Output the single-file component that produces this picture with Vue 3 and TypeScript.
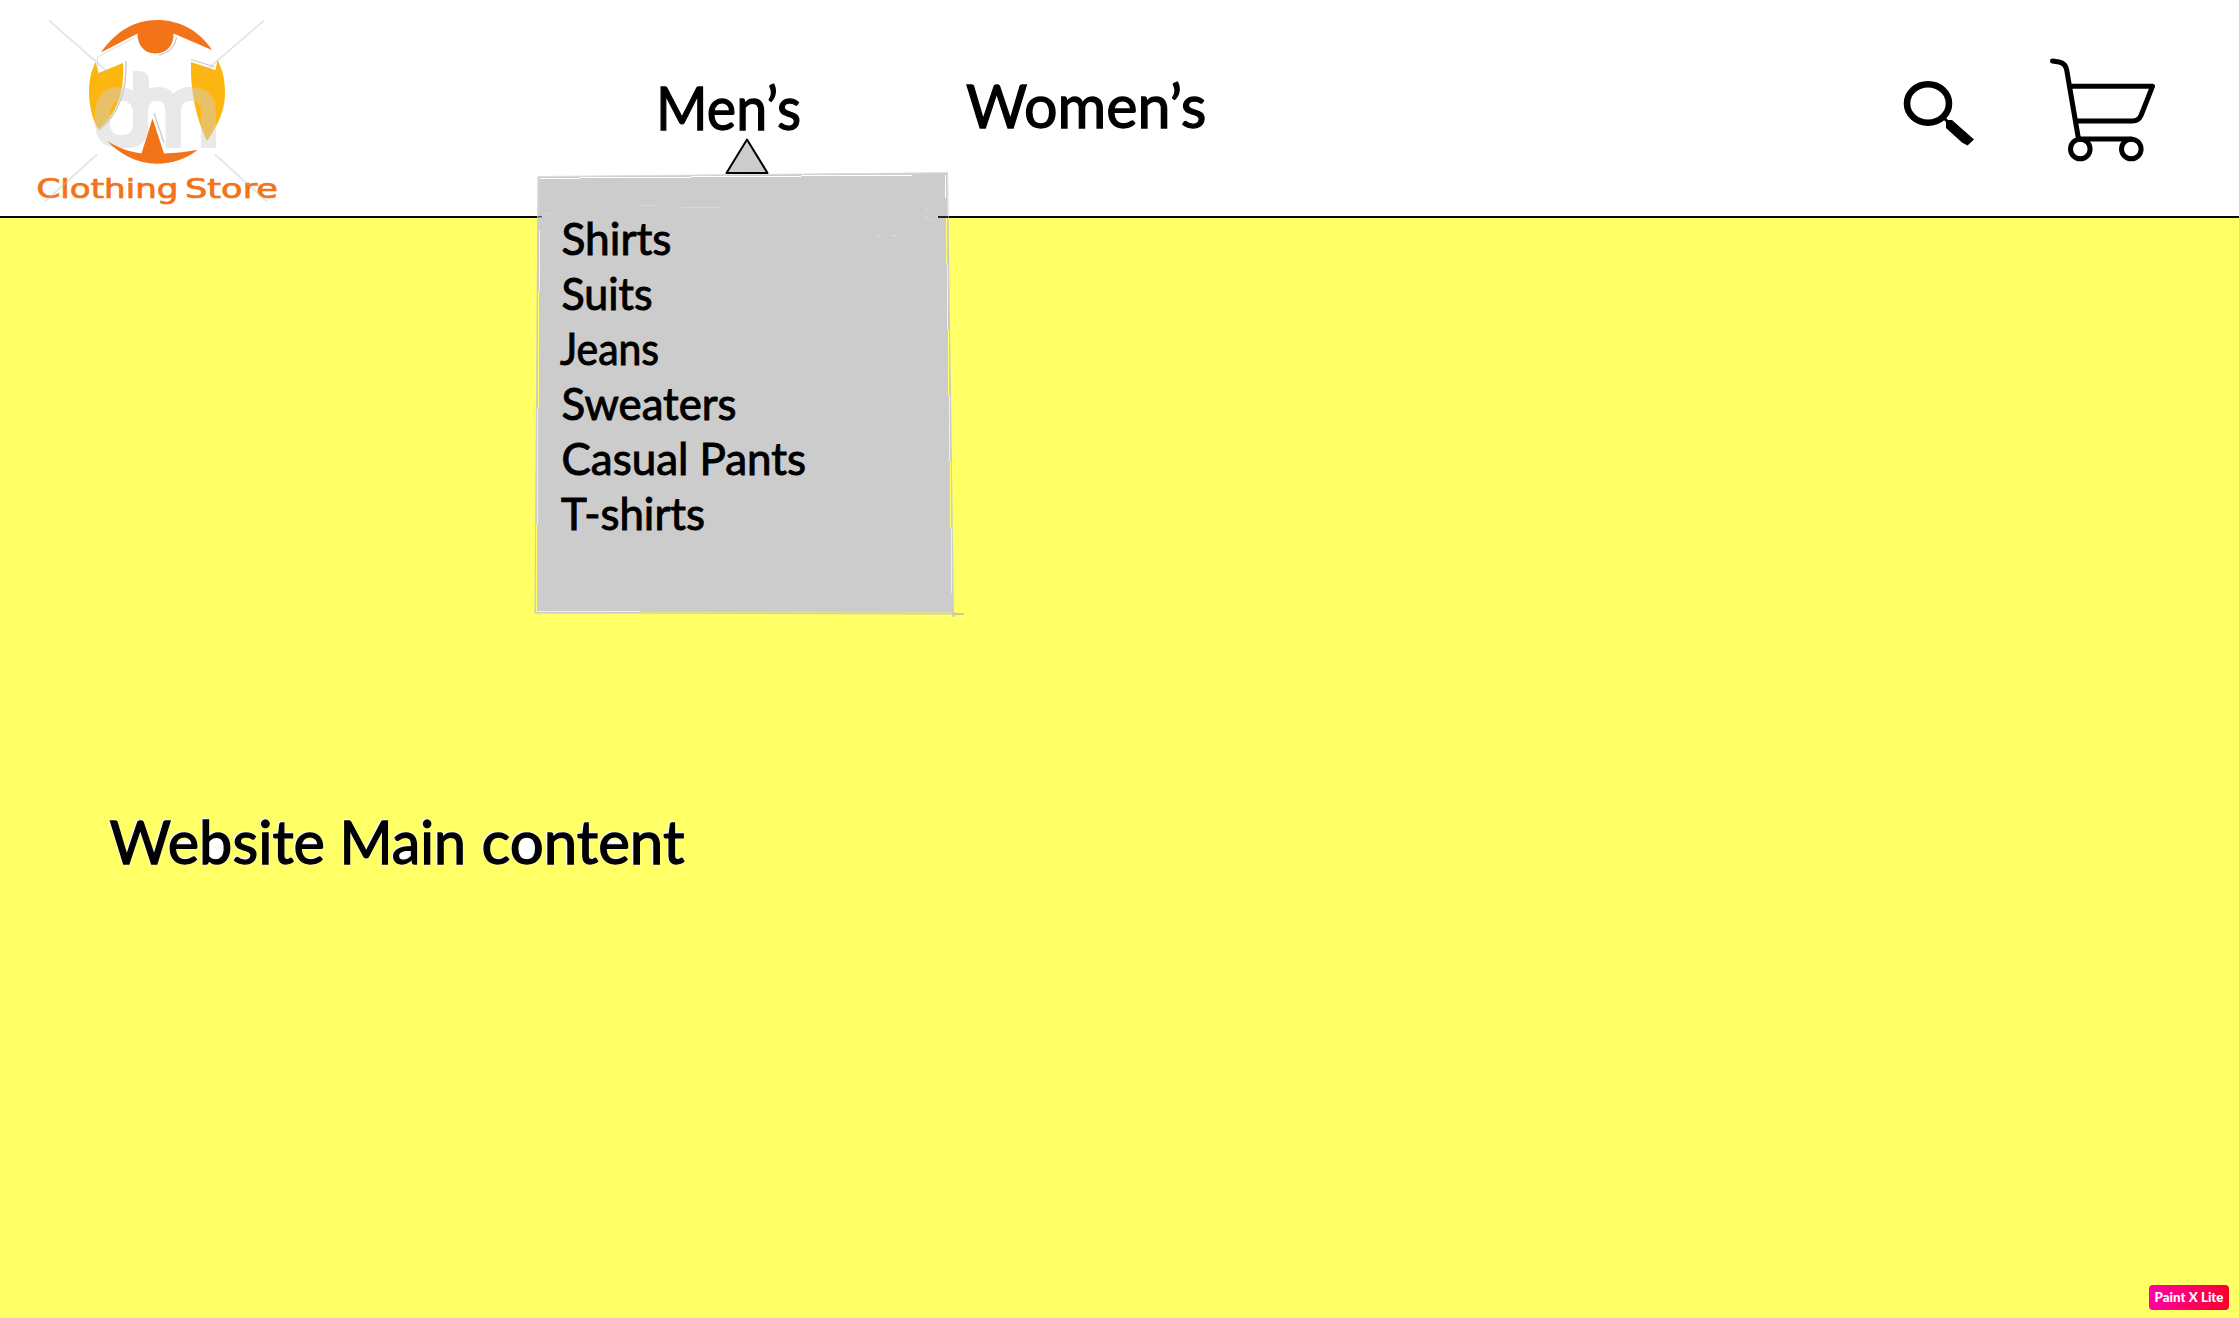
<script setup lang="ts">
interface FittedText {
  label: string
  x: number
  width: number
}

const items: FittedText[] = [
  { label: 'Shirts', x: 26.5, width: 110 },
  { label: 'Suits', x: 26.5, width: 91 },
  { label: 'Jeans', x: 25, width: 99 },
  { label: 'Sweaters', x: 26.5, width: 175 },
  { label: 'Casual Pants', x: 26.5, width: 244.5 },
  { label: 'T-shirts', x: 26, width: 144 },
]

const headline: FittedText[] = [
  { label: 'Website', x: 9.5, width: 215.5 },
  { label: 'Main', x: 239.5, width: 126.5 },
  { label: 'content', x: 381.5, width: 203 },
]
</script>

<template>
  <div class="page">
    <header class="bar">
      <svg class="logo" width="300" height="214" viewBox="0 0 300 214">
        <path fill="#f27318" d="M101 52.5C116 31 135 20 157 20s42 10 55 30L173.500 33.500C174 45 167 53.500 155.500 53.500S137.500 45 137.500 33.500Z" />
        <path fill="#fdb50f" d="M95.500 62L98.500 73 123 63C124 85 122 109 98.500 129.500 92 119 89 105 89 92 89 81 91 71 95.500 62Z" />
        <path fill="#fdb50f" d="M191 62L215.500 70 217.500 60C223 70 225 81 225 93 225 112 217 126 207 141 196 118 190 90 191 62Z" />
        <g fill="none" stroke="#c9c9c9" stroke-width="1.3">
          <path d="M126 61C127 92 118 115 99 130" />
          <path d="M176.500 37C175 47 169 53 159 55" />
          <path d="M191 59.500L215 67" />
          <path d="M154 113L164 143" />
          <path d="M97.500 70V57L134 38" stroke-width=".6" />
        </g>
        <g opacity=".46">
          <path fill="#cfcfcf" fill-rule="evenodd" d="M133 71H140Q149 72 149 80V89Q153 87 158 87C166 87 171 90 173.500 94 177 90 182 87 190 87 207 87 216 96 216 112V148H201V114C201 105 199 101 191 101S181 105 181 114V148H165.500V114C165.500 105 164 101 157 101S148 105 148 114V127C148 141 141 148 127 148H117C102 147 95 138 95 122V116C95 97 103 87 120 87 126 87 130 89 133 91ZM133 110C131 104 128 101 122 101 113 101 110 106 110 116V122C110 131 113 135 121 135S133 132 133 124Z" />
        </g>
        <path fill="#f27318" d="M107 141C120 149 131 152 141.500 153.500L152.500 118.500 164 153.500C177 153 188 151.500 197.500 150 186 159 172 163.700 157 163.700 137 163.700 120 154 107 141Z" />
        <g class="brand">
          <text x="36.500" y="197.500" textLength="142" lengthAdjust="spacingAndGlyphs">Clothing</text>
          <text x="185" y="197.500" textLength="93" lengthAdjust="spacingAndGlyphs">Store</text>
        </g>
        <path stroke="#bdbdbd" stroke-opacity=".4" stroke-width="1.700" d="M49 20.500L109 73M264 20.500L203 73M97 154.500L45 201.500M215 154.500L267 201.500" />
      </svg>

      <nav class="nav">
        <svg width="150" height="80" viewBox="0 0 150 80">
          <text class="nav-text" x="1" y="59.500" textLength="145" lengthAdjust="spacingAndGlyphs">Men’s</text>
        </svg>
        <svg width="250" height="80" viewBox="0 0 250 80">
          <text class="nav-text" x="6" y="57.800" textLength="240.500" lengthAdjust="spacingAndGlyphs">Women’s</text>
        </svg>
      </nav>

      <div class="tools">
        <svg width="76" height="70" viewBox="0 0 76 70" fill="none" stroke="#000">
          <ellipse cx="28" cy="28.500" rx="21" ry="19.200" stroke-width="6.600" />
          <path d="M43 42L48 47" stroke-width="3" />
          <path fill="#000" stroke="none" d="M46 45H52L74 64.500 67.500 70.500 62 67.500 46 53Z" />
        </svg>
        <svg width="110" height="110" viewBox="0 0 110 110" fill="none" stroke="#000" stroke-width="5" stroke-linecap="round" stroke-linejoin="round">
          <path d="M8.500 6L15 7C20 8 22 11 22.700 15L34.500 84" />
          <path d="M26.500 31.300H108.500L97 60.500Q94.500 66 88.500 66H32.500" />
          <path d="M36 84H87" />
          <circle cx="36.300" cy="94" r="9.800" />
          <circle cx="87.300" cy="94" r="9.800" />
        </svg>
      </div>
    </header>

    <main class="content">
      <svg width="620" height="80" viewBox="0 0 620 80">
        <g fill="#fff">
          <ellipse cx="87" cy="44" rx="8" ry="5" />
          <ellipse cx="116" cy="49" rx="8" ry="12" />
          <ellipse cx="210" cy="44" rx="8" ry="5" />
          <ellipse cx="304" cy="54" rx="5" ry="5" />
          <ellipse cx="428" cy="49" rx="9" ry="12" />
          <ellipse cx="515" cy="44" rx="8" ry="5" />
        </g>
        <text
          v-for="word in headline"
          :key="word.label"
          class="headline"
          :x="word.x"
          y="63.500"
          :textLength="word.width"
          lengthAdjust="spacingAndGlyphs"
        >{{ word.label }}</text>
      </svg>
    </main>

    <div class="dropdown">
      <svg class="panel" width="440" height="490" viewBox="0 0 440 490">
        <path fill="#ccc" d="M2.500 46.500L413 42.500 419 484.500 -.5 483.500Z" />
        <g fill="none" stroke-width="1">
          <path stroke="#ddd" d="M3 46.500L413 42.700M3 47V86M412.500 43V86" />
          <path stroke="#fff" d="M5 48.500H45M45 47.500H156M156 46.500H266M266 45.500H377M410.500 45V68" />
          <path stroke="#ff6" d="M4.500 100V161M3.500 161V278M2.500 278V395M1.500 395V481.500H105M411.500 88V134M412.500 134V200M413.500 200V266M414.500 266V332M415.500 332V398M416.500 398V463" />
          <path stroke="#e1e18f" d="M105 482.500H417" />
          <path stroke="#c9c99b" stroke-width="2" d="M418.500 484H429M418.500 482V487" />
          <path stroke="#ddd" stroke-dasharray="3 2" d="M19 83C8 84 3 88 7 92Q10 95 15 94M390 79C400 80 407 85 400 90L393 91 389 82" />
          <path stroke="#dadada" d="M103 75.500H121M146 77.500H186M342 105.500H347M356 105.500H363" />
          <path stroke="#222" stroke-width="2" d="M403 87H413" />
          <path stroke="#555" stroke-width="1.500" d="M3 86.700H7" />
        </g>
        <path fill="#ccc" stroke="#000" stroke-width="2" stroke-linejoin="round" d="M212 9.500L191.500 43H232.500Z" />
      </svg>
      <ul class="items">
        <li v-for="item in items" :key="item.label">
          <svg width="400" height="55" viewBox="0 0 400 55">
            <text class="item-text" :x="item.x" y="44.500" :textLength="item.width" lengthAdjust="spacingAndGlyphs">{{ item.label }}</text>
          </svg>
        </li>
      </ul>
    </div>

    <div class="badge">
      <svg width="80" height="25" viewBox="0 0 80 25">
        <text class="badge-text" x="5.500" y="16.500" textLength="69" lengthAdjust="spacingAndGlyphs">Paint X Lite</text>
      </svg>
    </div>
  </div>
</template>

<style>
body {
  margin: 0;
  overflow: hidden;
}
</style>

<style scoped>
.page {
  position: relative;
  width: 2239px;
  height: 1318px;
  background: #ff6;
  font-family: Lato, "Liberation Sans", sans-serif;
  overflow: hidden;
}
svg {
  display: block;
  flex: none;
  overflow: visible;
}
.bar {
  box-sizing: border-box;
  display: flex;
  height: 218px;
  background: #fff;
  border-bottom: 2px solid #08080f;
}
.brand {
  font: 26px "DejaVu Sans", sans-serif;
  fill: #f27318;
  stroke: #f27318;
  stroke-width: 0.7px;
}
.nav {
  display: flex;
  gap: 155px;
  margin-left: 355px;
  padding-top: 70px;
}
.nav-text {
  font-size: 60.500px;
  fill: #000;
  stroke: #000;
  stroke-width: 1.300px;
}
.tools {
  display: flex;
  align-items: flex-start;
  gap: 68px;
  margin-left: auto;
  padding: 55px 85px 0 0;
}
.tools svg:first-child {
  margin-top: 20px;
}
.content {
  padding: 582px 0 0 100px;
}
.headline {
  font-size: 60.500px;
  fill: #000;
  stroke: #000;
  stroke-width: 1.300px;
  filter: drop-shadow(0.8px 0.8px 0 #f4f4ff) drop-shadow(-0.8px -0.8px 0 #f4f4ff);
}
.dropdown {
  position: absolute;
  left: 535px;
  top: 130px;
  width: 440px;
  height: 490px;
}
.panel {
  position: absolute;
  inset: 0;
}
.items {
  position: relative;
  margin: 0;
  padding: 80px 0 0;
  list-style: none;
}
.item-text {
  font-size: 45.300px;
  fill: #000;
  stroke: #000;
  stroke-width: 1px;
}
.badge {
  position: absolute;
  right: 10px;
  bottom: 8px;
  width: 80px;
  height: 25px;
  border-radius: 4px;
  background: linear-gradient(100deg, #ff00a8, #fa0028);
}
.badge-text {
  font-size: 13px;
  font-weight: 900;
  fill: #fff;
}
</style>
